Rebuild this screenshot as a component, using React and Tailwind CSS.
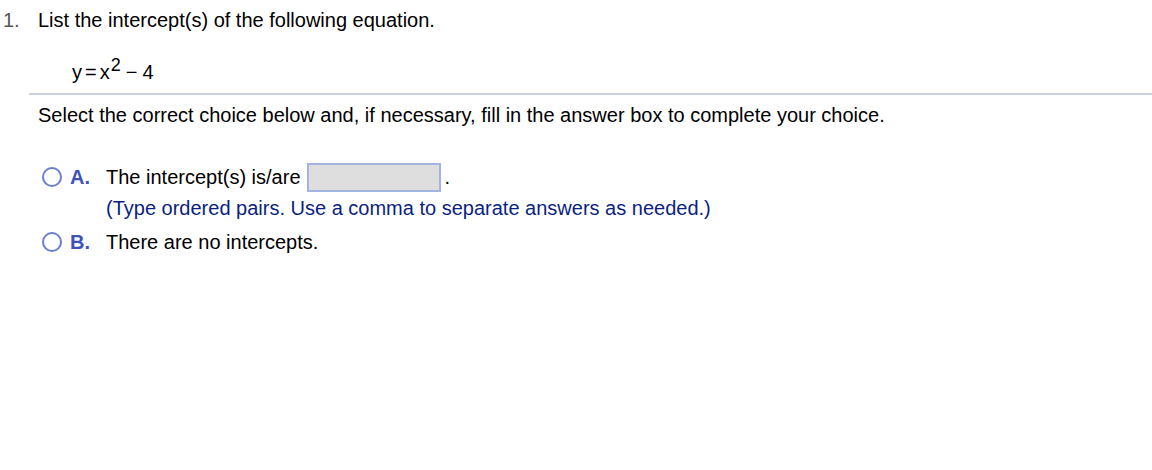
export default function App() {
  const font = { fontFamily: '"Liberation Sans", Arial, sans-serif' };
  return (
    <div className="w-[1152px] h-[470px] bg-white text-[20px] text-black" style={font}>
      <div className="flex pt-[8px] leading-[24px]">
        <div className="w-[38px] pl-[3px] text-[#555]">1.</div>
        <div>List the intercept(s) of the following equation.</div>
      </div>
      <div className="pl-[72px] mt-[28px] leading-[24px] flex items-baseline">
        <span>y</span>
        <span className="mx-[3px]">=</span>
        <span>x</span>
        <span className="text-[18px] relative top-[-8px] ml-[1px]">2</span>
        <span className="ml-[5px] mr-[5px]">−</span>
        <span>4</span>
      </div>
      <div className="ml-[29px] mt-[8px] h-[2px] bg-[#ccd0dc]"></div>
      <div className="pl-[38px] pt-[8px] leading-[24px]">
        Select the correct choice below and, if necessary, fill in the answer box to complete your choice.
      </div>
      <div className="pl-[42px] pt-[36px]">
        <div className="flex items-start h-[29px] leading-[24px]">
          <span className="mt-[4px] w-[20px] h-[20px] rounded-full border-2 border-[#6a7fd0] box-border"></span>
          <span className="mt-[2px] ml-[8px] w-[36px] font-bold text-[#3e52b8]">A.</span>
          <span className="mt-[2px]">The intercept(s) is/are</span>
          <span className="ml-[6px] w-[134px] h-[29px] bg-[#dedede] border-2 border-[#a3b4e3] box-border"></span>
          <span className="mt-[2px] ml-[4px]">.</span>
        </div>
        <div className="pl-[64px] mt-[4px] leading-[24px] text-[#0b1f80]">
          (Type ordered pairs. Use a comma to separate answers as needed.)
        </div>
        <div className="flex items-start h-[29px] mt-[8px] leading-[24px]">
          <span className="mt-[4px] w-[20px] h-[20px] rounded-full border-2 border-[#6a7fd0] box-border"></span>
          <span className="mt-[2px] ml-[8px] w-[36px] font-bold text-[#3e52b8]">B.</span>
          <span className="mt-[2px]">There are no intercepts.</span>
        </div>
      </div>
    </div>
  );
}
